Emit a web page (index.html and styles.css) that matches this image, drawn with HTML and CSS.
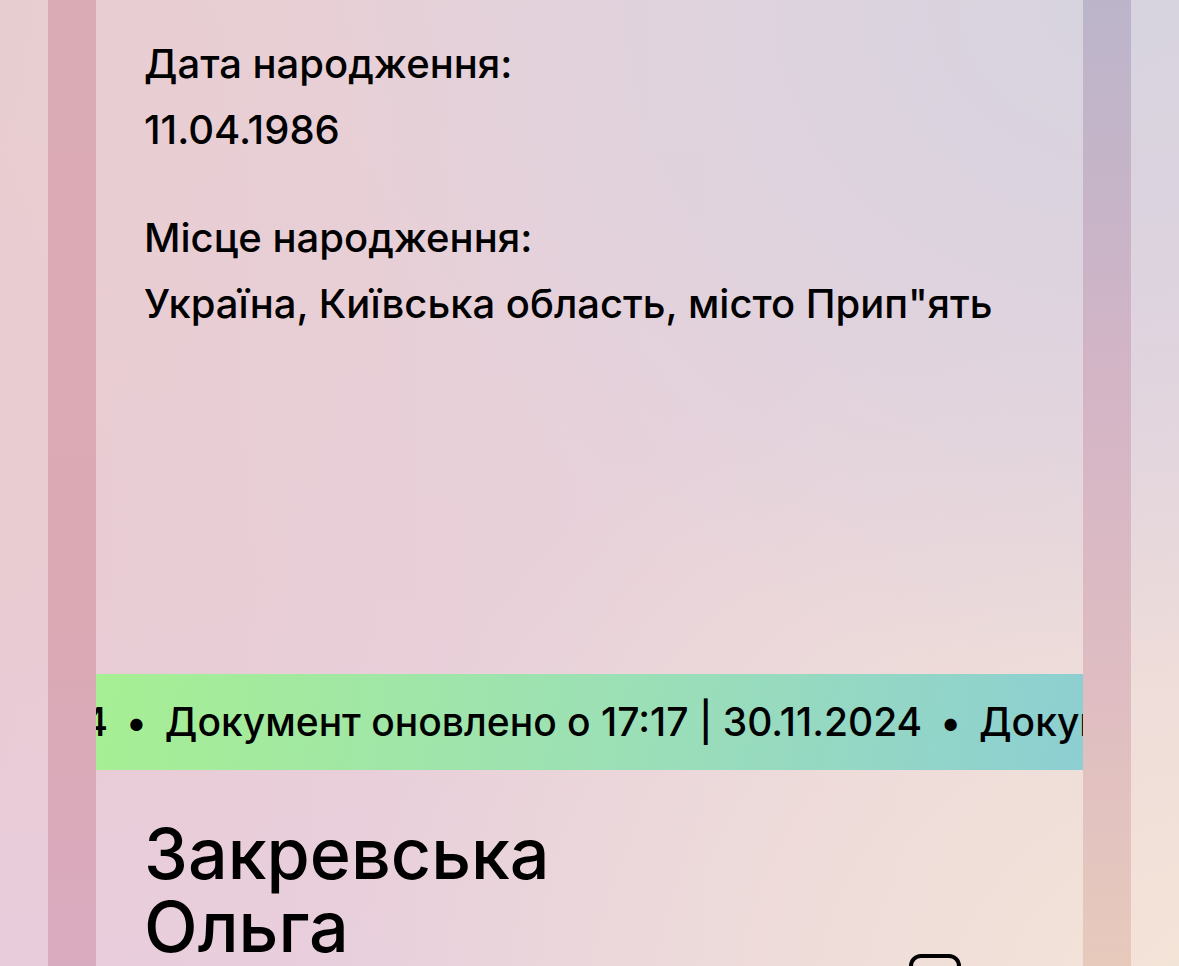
FILE: index.html
```html
<!DOCTYPE html>
<html lang="uk">
<head>
  <meta charset="UTF-8">
  <meta name="viewport" content="width=device-width, initial-scale=1.0">
  <title>Документ</title>
  <link rel="stylesheet" href="styles.css">
</head>
<body>
  <main class="carousel">
    <div class="card-edge"></div>

    <article class="card">
      <dl class="details">
        <div class="field">
          <dt>Дата народження:</dt>
          <dd>11.04.1986</dd>
        </div>
        <div class="field">
          <dt>Місце народження:</dt>
          <dd>Україна, Київська область, місто Прип"ять</dd>
        </div>
      </dl>

      <div class="ticker">
        <div class="ticker-track">
          <span>Документ оновлено о 17:17 | 30.11.2024</span>
          <span class="dot">•</span>
          <span>Документ оновлено о 17:17 | 30.11.2024</span>
          <span class="dot">•</span>
          <span>Документ оновлено о 17:17 | 30.11.2024</span>
        </div>
      </div>

      <footer class="owner">
        <h1>Закревська<br>Ольга</h1>
        <button class="copy-btn" aria-label="Копіювати">
          <svg width="68" height="68" viewBox="0 0 68 68" fill="none" stroke="#000" stroke-width="4">
            <rect x="2" y="2" width="48" height="48" rx="10"/>
            <path d="M50 14h6a10 10 0 0 1 10 10v32a10 10 0 0 1-10 10H24a10 10 0 0 1-10-10v-6"/>
          </svg>
        </button>
      </footer>
    </article>

    <div class="card-edge"></div>
  </main>
</body>
</html>
```

FILE: styles.css
```css
* {
  box-sizing: border-box;
}

body {
  margin: 0;
  height: 100vh;
  overflow: hidden;
  font-family: Inter, "Noto Sans", sans-serif;
  font-weight: 500;
  color: #000;
  background:
    radial-gradient(ellipse at 95% 0%, #d7d4df 0%, rgba(218, 211, 224, 0.8) 20%, rgba(228, 210, 220, 0) 50%),
    radial-gradient(ellipse at 105% 105%, #f4e5d7 0%, rgba(242, 226, 216, 0.8) 18%, rgba(237, 216, 219, 0) 52%),
    linear-gradient(90deg, rgba(231, 211, 221, 0) 0%, rgba(231, 211, 221, 0.7) 50%, #e8d4dc 100%),
    linear-gradient(180deg, #e8cdd0 0%, #e9cbd2 60%, #e9ccdc 100%);
}

.carousel {
  display: flex;
  min-height: 100vh;
  padding: 0 48px;
}

.card-edge {
  flex: 0 0 48px;
  background: linear-gradient(180deg, #dbabb5 0%, #dba9b4 60%, #d9abc1 100%);
}

.card-edge:last-child {
  background: linear-gradient(180deg, #bcb5ca 0%, #c7b4c8 20%, #d4b5c6 38%, #dfbdc2 68%, #e8cabc 95%);
}

.card {
  flex: 1;
  min-width: 0;
}

.details {
  height: 674px;
  margin: 0;
  padding: 31px 48px 0;
  font-size: 40px;
  line-height: 66px;
}

.field {
  margin-bottom: 42px;
}

.field dd {
  margin: 0;
  white-space: nowrap;
}

.ticker {
  display: flex;
  justify-content: center;
  height: 96px;
  padding-right: 92px;
  overflow: hidden;
  background: linear-gradient(100deg, #a7ef93 0%, #9bdfb7 55%, #8dcfd2 100%);
}

.ticker-track {
  display: flex;
  flex: none;
  gap: 18px;
  font-size: 39px;
  line-height: 96px;
  white-space: nowrap;
}

.owner {
  display: flex;
  justify-content: space-between;
  min-height: 252px;
  padding: 47px 106px 0 48px;
}

.owner h1 {
  margin: 0;
  font-size: 70px;
  font-weight: 500;
  line-height: 73px;
}

.copy-btn {
  display: flex;
  align-self: flex-end;
  padding: 0;
  border: 0;
  background: none;
}
```
